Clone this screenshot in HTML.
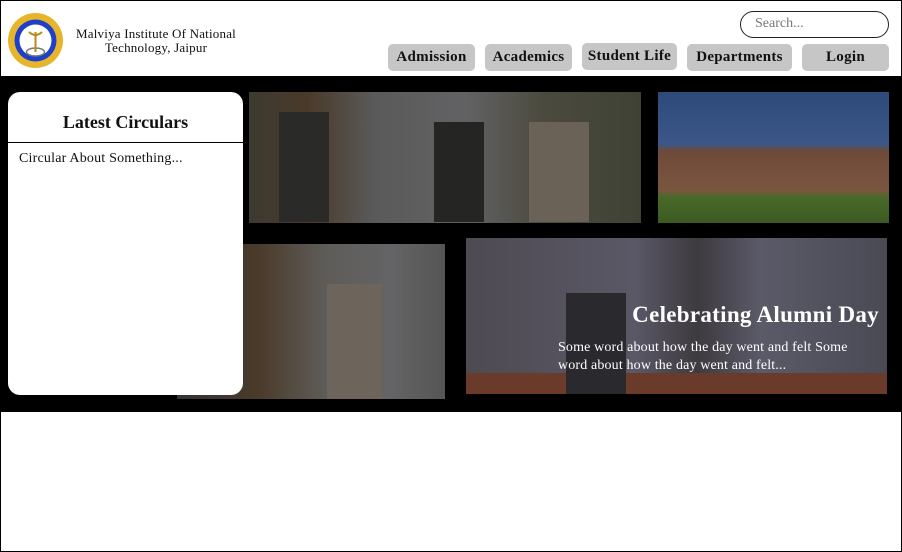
<!DOCTYPE html>
<html><head><meta charset="utf-8"><style>
*{margin:0;padding:0;box-sizing:border-box}
body{width:902px;height:552px;overflow:hidden;background:#fff;font-family:"Liberation Serif",serif;position:relative}
.frame{position:absolute;left:0;top:0;width:902px;height:552px;border:1px solid #000}
.band{position:absolute;left:1px;top:76px;width:900px;height:336px;background:#000}
.btn{position:absolute;top:44px;height:27px;background:#c6c6c6;border-radius:5px;font-size:15px;font-weight:bold;color:#111;text-align:center;line-height:27px;letter-spacing:0.3px}
.img{position:absolute;overflow:hidden}
</style></head><body>
<div class="frame"></div>
<svg style="position:absolute;left:7px;top:12px" width="57" height="57" viewBox="0 0 57 57">
<circle cx="28.5" cy="28.5" r="27.5" fill="#e7b52c"/>
<circle cx="28.5" cy="28.5" r="21" fill="#1e3fc8"/>
<circle cx="28.5" cy="28.5" r="16" fill="#fff"/>
<ellipse cx="28.5" cy="40" rx="9" ry="4" fill="none" stroke="#777" stroke-width="1.5"/>
<path d="M28.5 20v20M22 20q6.5 6 13 0" stroke="#b88a1a" stroke-width="2" fill="none"/>
</svg>
<div style="position:absolute;left:66px;top:27px;width:180px;text-align:center;font-size:13px;line-height:14px;color:#111;letter-spacing:0.2px">Malviya Institute Of National<br>Technology, Jaipur</div>
<div style="position:absolute;left:740px;top:11px;width:149px;height:27px;border:1.5px solid #222;border-radius:14px;font-size:14px;color:#777;padding-left:14px;line-height:24px">Search...</div>
<div class="btn" style="left:388px;width:87px">Admission</div>
<div class="btn" style="left:485px;width:87px">Academics</div>
<div class="btn" style="left:582px;width:95px;top:43px">Student Life</div>
<div class="btn" style="left:687px;width:105px">Departments</div>
<div class="btn" style="left:802px;width:87px">Login</div>
<div class="band"></div>
<div class="img" style="left:249px;top:92px;width:392px;height:131px;background:linear-gradient(90deg,#3d3a30 0%,#4a3a2a 15%,#5a5a5a 32%,#626264 55%,#4b4a3e 75%,#3e4234 100%)">
<div style="position:absolute;left:30px;top:20px;width:50px;height:110px;background:#2a2a28"></div>
<div style="position:absolute;left:185px;top:30px;width:50px;height:100px;background:#252524"></div>
<div style="position:absolute;left:280px;top:30px;width:60px;height:100px;background:#6b6257"></div>
</div>
<div class="img" style="left:658px;top:92px;width:231px;height:131px;background:linear-gradient(180deg,#2d4a7a 0%,#3c5787 40%,#6e4a38 45%,#7a5540 75%,#4a6a2a 80%,#3a5a22 100%)"></div>
<div class="img" style="left:177px;top:244px;width:268px;height:155px;background:linear-gradient(90deg,#333 0%,#4a3a2a 30%,#5e5c58 55%,#646466 80%,#555 100%)">
<div style="position:absolute;left:150px;top:40px;width:55px;height:115px;background:#6d655c"></div>
</div>
<div class="img" style="left:466px;top:238px;width:421px;height:156px;background:linear-gradient(90deg,#4e4a52 0%,#5a5866 40%,#3e3a40 55%,#5a5a68 70%,#4a4a55 100%)">
<div style="position:absolute;left:0;top:135px;width:421px;height:21px;background:#6a3a2a"></div>
<div style="position:absolute;left:100px;top:55px;width:60px;height:101px;background:#2a2a2e"></div>
<div style="position:absolute;left:100px;top:64px;width:313px;font-size:23px;font-weight:bold;color:#fff;text-align:right;letter-spacing:0.3px">Celebrating Alumni Day</div>
<div style="position:absolute;left:92px;top:101px;width:322px;font-size:14px;line-height:18px;color:#fff;letter-spacing:0.15px">Some word about how the day went and felt Some word about how the day went and felt...</div>
</div>
<div style="position:absolute;left:8px;top:92px;width:235px;height:303px;background:#fff;border-radius:12px">
<div style="position:absolute;left:0;top:20px;width:235px;text-align:center;font-size:18px;font-weight:bold;color:#111">Latest Circulars</div>
<div style="position:absolute;left:0;top:50px;width:235px;border-top:1px solid #000"></div>
<div style="position:absolute;left:11px;top:59px;font-size:14px;color:#111;letter-spacing:0.2px">Circular About Something...</div>
</div>
</body></html>
